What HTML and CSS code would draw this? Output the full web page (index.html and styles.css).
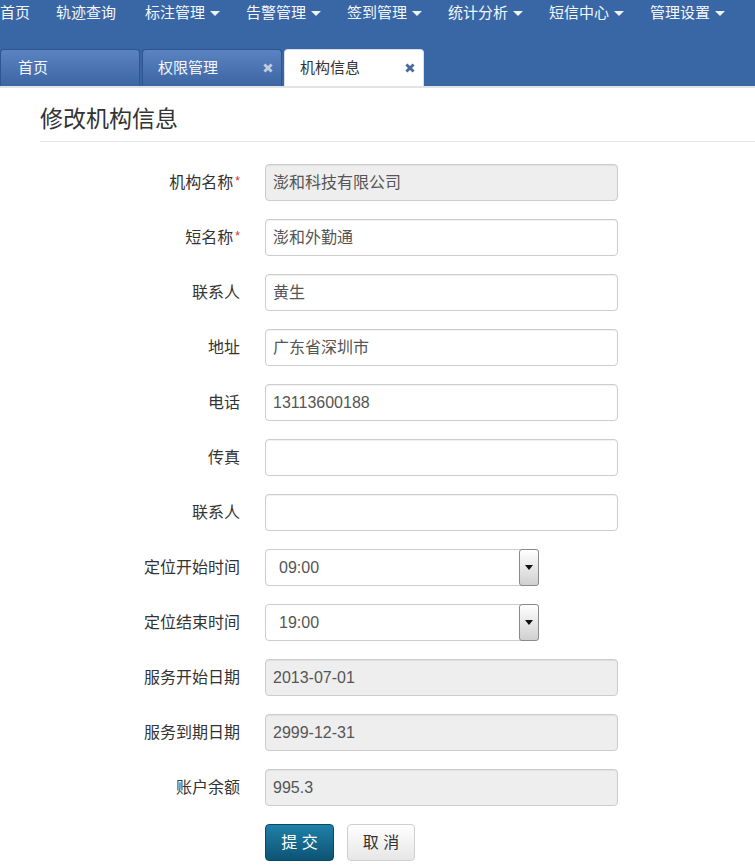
FILE: index.html
```html
<!DOCTYPE html>
<html lang="zh-CN">
<head>
<meta charset="utf-8">
<title>修改机构信息</title>
<link rel="stylesheet" href="styles.css">
</head>
<body>
<header class="top">
  <nav class="menu">
    <a class="menu-item">首页</a>
    <a class="menu-item wide">轨迹查询</a>
    <a class="menu-item">标注管理<span class="caret"></span></a>
    <a class="menu-item">告警管理<span class="caret"></span></a>
    <a class="menu-item">签到管理<span class="caret"></span></a>
    <a class="menu-item">统计分析<span class="caret"></span></a>
    <a class="menu-item">短信中心<span class="caret"></span></a>
    <a class="menu-item">管理设置<span class="caret"></span></a>
  </nav>
  <div class="tabs">
    <div class="tab first"><span>首页</span></div>
    <div class="tab"><span>权限管理</span><svg class="close" viewBox="0 0 10 10"><path d="M2 2L8 8M8 2L2 8"/></svg></div>
    <div class="tab active"><span>机构信息</span><svg class="close" viewBox="0 0 10 10"><path d="M2 2L8 8M8 2L2 8"/></svg></div>
  </div>
</header>

<main class="content">
  <h1 class="page-title">修改机构信息</h1>
  <form class="form">
    <label class="label">机构名称<span class="req">*</span></label>
    <div class="input disabled">澎和科技有限公司</div>

    <label class="label">短名称<span class="req">*</span></label>
    <div class="input">澎和外勤通</div>

    <label class="label">联系人</label>
    <div class="input">黄生</div>

    <label class="label">地址</label>
    <div class="input">广东省深圳市</div>

    <label class="label">电话</label>
    <div class="input">13113600188</div>

    <label class="label">传真</label>
    <div class="input"></div>

    <label class="label">联系人</label>
    <div class="input"></div>

    <label class="label">定位开始时间</label>
    <div class="select"><span class="select-text">09:00</span><span class="select-btn"><span class="tri"></span></span></div>

    <label class="label">定位结束时间</label>
    <div class="select"><span class="select-text">19:00</span><span class="select-btn"><span class="tri"></span></span></div>

    <label class="label">服务开始日期</label>
    <div class="input disabled">2013-07-01</div>

    <label class="label">服务到期日期</label>
    <div class="input disabled">2999-12-31</div>

    <label class="label">账户余额</label>
    <div class="input disabled">995.3</div>

    <div class="actions">
      <button type="button" class="btn btn-primary">提 交</button>
      <button type="button" class="btn btn-default">取 消</button>
    </div>
  </form>
</main>
</body>
</html>
```

FILE: styles.css
```css
body {
  margin: 0;
  font-family: "Liberation Sans", "Noto Sans CJK SC", sans-serif;
  color: #333;
  background: #fff;
}

.top {
  height: 86px;
  background: #3966a5;
  border-bottom: 2px solid #e3e3e3;
  overflow: hidden;
}

.menu {
  display: flex;
  height: 26px;
  margin-left: -13px;
}

.menu-item {
  display: flex;
  align-items: center;
  gap: 5px;
  padding: 0 13px;
  font-size: 15px;
  line-height: 26px;
  color: #f4f7fc;
  white-space: nowrap;
}

.menu-item.wide {
  margin-right: 3px;
}

.caret {
  width: 0;
  height: 0;
  border-left: 5px solid transparent;
  border-right: 5px solid transparent;
  border-top: 5px solid #eef2f9;
  margin-top: 1px;
}

.tabs {
  display: flex;
  gap: 2px;
  margin-top: 23px;
  height: 37px;
}

.tab {
  width: 140px;
  box-sizing: border-box;
  display: flex;
  align-items: center;
  justify-content: space-between;
  padding: 0 7px 0 15px;
  border: 1px solid #2d5590;
  border-bottom: none;
  border-radius: 4px 4px 0 0;
  background: linear-gradient(#5b83c2, #3c65a4);
  color: #f4f7fc;
  font-size: 15px;
  line-height: 20px;
}

.tab.first {
  padding-left: 17px;
}

.tab.active {
  background: #fff;
  border-color: #d8dde6;
  color: #333;
}

.close {
  width: 12px;
  height: 12px;
  fill: none;
  stroke: #c3cde0;
  stroke-width: 2.4;
}

.tab.active .close {
  stroke: #4a6a9c;
}

.content {
  padding-left: 40px;
}

.page-title {
  margin: 16px 0 0;
  padding-bottom: 7px;
  border-bottom: 1px solid #e5e5e5;
  font-size: 23px;
  font-weight: normal;
  line-height: 30px;
  color: #333;
}

.form {
  display: grid;
  grid-template-columns: 200px 353px;
  column-gap: 25px;
  row-gap: 18px;
  margin-top: 22px;
  padding-bottom: 6px;
}

.label {
  height: 37px;
  text-align: right;
  font-size: 16px;
  line-height: 37px;
  color: #333;
  white-space: nowrap;
}

.req {
  color: #d9261c;
  font-size: 12px;
  line-height: 0;
  margin-left: 2px;
  vertical-align: 3px;
}

.input {
  height: 37px;
  box-sizing: border-box;
  border: 1px solid #cccccc;
  border-radius: 4px;
  padding: 0 7px;
  font-size: 16px;
  line-height: 35px;
  color: #555;
  background: #fff;
  box-shadow: inset 0 1px 1px rgba(0, 0, 0, 0.06);
}

.input.disabled {
  background: #eeeeee;
}

.select {
  width: 274px;
  height: 37px;
  box-sizing: border-box;
  display: flex;
  align-items: stretch;
  justify-content: space-between;
  border: 1px solid #cccccc;
  border-radius: 4px;
  background: #fff;
  font-size: 16px;
  color: #555;
}

.select-text {
  padding-left: 13px;
  line-height: 35px;
}

.select-btn {
  width: 20px;
  box-sizing: border-box;
  display: flex;
  align-items: center;
  justify-content: center;
  border: 1px solid #8a8a8a;
  border-radius: 3px;
  margin: -1px -1px -1px 0;
  background: linear-gradient(#ffffff, #d0d0d0);
}

.tri {
  width: 0;
  height: 0;
  border-left: 4px solid transparent;
  border-right: 4px solid transparent;
  border-top: 5px solid #111;
}

.actions {
  grid-column: 2;
  display: flex;
  gap: 13px;
}

.btn {
  height: 37px;
  box-sizing: border-box;
  padding: 0;
  border-radius: 4px;
  font-family: inherit;
  font-size: 16px;
  line-height: 35px;
  white-space: nowrap;
  text-align: center;
  cursor: pointer;
}

.btn-primary {
  width: 69px;
  border: 1px solid #0b4a67;
  background: linear-gradient(#2080a8, #0c5474);
  color: #fff;
}

.btn-default {
  width: 68px;
  border: 1px solid #cfcfcf;
  background: linear-gradient(#ffffff, #e6e6e6);
  color: #333;
}
```
